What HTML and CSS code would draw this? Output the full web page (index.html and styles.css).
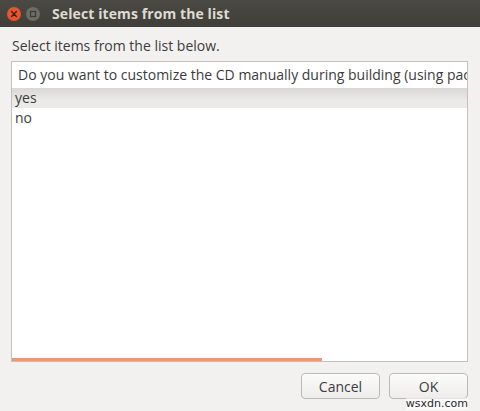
FILE: index.html
```html
<!DOCTYPE html>
<html>
<head>
<meta charset="utf-8">
<link rel="stylesheet" href="styles.css">
</head>
<body>
<div class="window">
  <div class="titlebar">
    <span class="wbtn close">
      <svg width="14" height="14" viewBox="0 0 14 14"><circle cx="7" cy="7" r="7" fill="#e9542b"/><path d="M4.6 4.6 L9.4 9.4 M9.4 4.6 L4.6 9.4" stroke="#3c2218" stroke-width="1.4" stroke-linecap="round"/></svg>
    </span>
    <span class="wbtn max">
      <svg width="14" height="14" viewBox="0 0 14 14"><circle cx="7" cy="7" r="7" fill="#6e6c67"/><rect x="4.5" y="4.5" width="5" height="5" fill="none" stroke="#3b3a36" stroke-width="1.2"/></svg>
    </span>
    <span class="title">Select items from the list</span>
  </div>
  <div class="content">
    <div class="label">Select items from the list below.</div>
    <div class="list">
      <div class="header">Do you want to customize the CD manually during building (using packages)?</div>
      <div class="row selected">yes</div>
      <div class="row">no</div>
      <div class="scrollbar"></div>
    </div>
    <div class="buttons">
      <button class="btn">Cancel</button>
      <button class="btn">OK</button>
    </div>
  </div>
  <div class="watermark">wsxdn.com</div>
</div>
</body>
</html>
```

FILE: styles.css
```css
html, body {
  margin: 0;
  padding: 0;
}
body {
  width: 480px;
  height: 411px;
  overflow: hidden;
  background: #f2f1f0;
  font-family: "Open Sans", "DejaVu Sans", sans-serif;
  color: #3c3c3c;
}
.window {
  position: relative;
  width: 480px;
  height: 411px;
}
.titlebar {
  height: 27px;
  background: linear-gradient(#4b4943, #3f3e39);
  display: flex;
  align-items: center;
  padding-left: 7px;
  box-sizing: border-box;
}
.wbtn {
  display: flex;
  width: 14px;
  height: 14px;
  margin-right: 5px;
}
.title {
  margin-left: 7px;
  font-weight: bold;
  font-size: 14px;
  color: #dfdbd2;
  letter-spacing: 0.1px;
}
.content {
  padding: 0 12px 0 11px;
}
.label {
  font-size: 14px;
  margin-top: 10px;
  height: 24px;
  line-height: 18px;
  padding-left: 1px;
  color: #3c3c3c;
}
.list {
  position: relative;
  height: 301px;
  box-sizing: border-box;
  border: 1px solid #c4c1bd;
  background: #ffffff;
  overflow: hidden;
  font-size: 14px;
}
.header {
  height: 26px;
  line-height: 25px;
  padding-left: 6px;
  white-space: nowrap;
  overflow: hidden;
  background: #ffffff;
  box-shadow: 0 1px 0 #e4e2df;
  color: #3c3c3c;
}
.row {
  height: 20px;
  line-height: 20px;
  padding-left: 3px;
  color: #3c3c3c;
}
.row.selected {
  background: linear-gradient(#dad8d5, #ebeae8 60%, #eceae8);
}
.scrollbar {
  position: absolute;
  left: 0;
  bottom: 0;
  width: 310px;
  height: 3px;
  background: #eb9a79;
}
.buttons {
  display: flex;
  justify-content: flex-end;
  gap: 9px;
  margin-top: 11px;
}
.btn {
  width: 79px;
  height: 26px;
  box-sizing: border-box;
  border: 1px solid #bdb9b4;
  border-radius: 4px;
  background: linear-gradient(#fbfbfa, #eeedeb);
  box-shadow: inset 0 1px 0 #ffffff;
  font-family: "Open Sans", "DejaVu Sans", sans-serif;
  font-size: 14px;
  color: #3c3c3c;
  padding: 0;
}
.watermark {
  position: absolute;
  right: 12px;
  bottom: 1px;
  font-family: "DejaVu Sans", sans-serif;
  font-size: 11px;
  color: #2a2a2a;
  background: rgba(255,255,255,0.6);
  line-height: 12px;
}
```
